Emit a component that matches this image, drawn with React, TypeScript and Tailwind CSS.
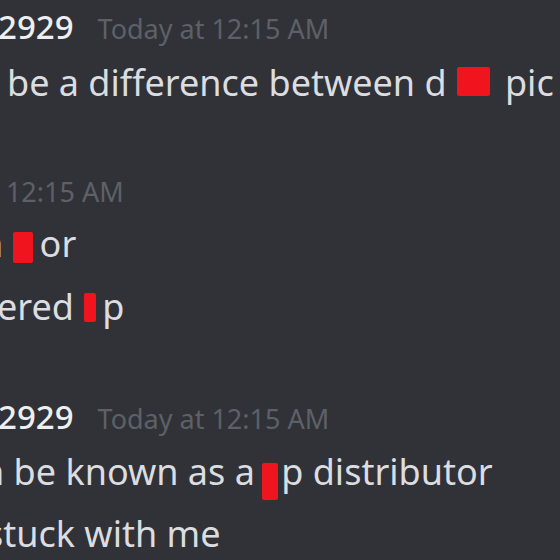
const Censor = ({ className }: { className: string }) => (
  <span className={`inline-block bg-[#f0141e] rounded-[2px] align-baseline ${className}`} />
);

export default function App() {
  return (
    <div
      className="w-[560px] h-[560px] overflow-hidden bg-[#303237] text-[#dcdde0] pt-[3px] leading-[48px] whitespace-nowrap"
      style={{ fontFamily: '"Noto Sans", "Open Sans", sans-serif' }}
    >
      {/* group 1 */}
      <div className="h-[56px] flex items-baseline">
        <span className="text-[33px] font-medium text-[#eeeff1] -ml-[2px]">2929</span>
        <span className="text-[27px] text-[#5e6068] ml-[24px]">Today at 12:15 AM</span>
      </div>
      <div className="h-[109px] text-[36px] pl-[7px]">
        be a difference between d<Censor className="w-[33px] h-[29px] ml-[10px] mr-[6px]" /> pic
      </div>

      {/* group 2 */}
      <div className="h-[52px] flex items-baseline -ml-[108px]">
        <span className="text-[27px] text-[#5e6068]">Today at 12:15 AM</span>
      </div>
      <div className="h-[63px] text-[36px] -ml-[19px]">
        n <Censor className="w-[20px] h-[31px] -mb-[6px] mr-[7px]" />or
      </div>
      <div className="h-[110px] text-[36px] -ml-[3px]">
        ered <Censor className="w-[12px] h-[29px] -mb-[2px] ml-[1px] mr-[6px]" />p
      </div>

      {/* group 3 */}
      <div className="h-[55px] flex items-baseline">
        <span className="text-[33px] font-medium text-[#eeeff1] -ml-[2px]">2929</span>
        <span className="text-[27px] text-[#5e6068] ml-[24px]">Today at 12:15 AM</span>
      </div>
      <div className="h-[62px] text-[36px] -ml-[18px]">
        n be known as a <Censor className="w-[16px] h-[37px] -mb-[15px] -ml-[2px] mr-[3px]" />p distributor
      </div>
      <div className="h-[60px] text-[36px] -ml-[14px]">
        stuck with me
      </div>
    </div>
  );
}
